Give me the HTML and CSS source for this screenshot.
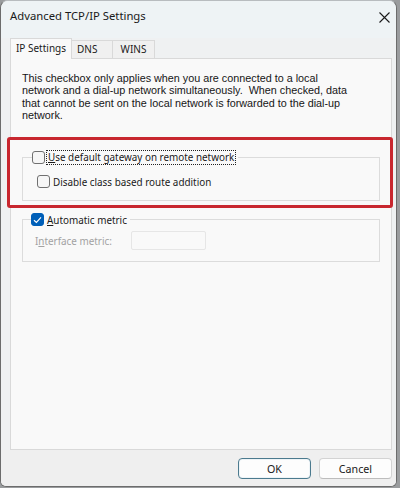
FILE: index.html
```html
<!DOCTYPE html>
<html>
<head>
<meta charset="utf-8">
<link rel="stylesheet" href="styles.css">
</head>
<body>
<div class="window">
  <div class="titlebar">
    <span class="title">Advanced TCP/IP Settings</span>
    <span class="close">
      <svg width="11" height="11" viewBox="0 0 11 11"><path d="M0.5 0.5 L10.5 10.5 M10.5 0.5 L0.5 10.5" stroke="#1a1a1a" stroke-width="1.1" fill="none"/></svg>
    </span>
  </div>
  <div class="body">
    <div class="tabs">
      <div class="tab active">IP Settings</div>
      <div class="tab dns">DNS</div>
      <div class="tab wins">WINS</div>
    </div>
    <div class="panel">
      <p class="info">This checkbox only applies when you are connected to a local<br>network and a dial-up network simultaneously.&nbsp; When checked, data<br>that cannot be sent on the local network is forwarded to the dial-up<br>network.</p>
      <div class="highlight">
        <fieldset class="group g1">
          <legend><span class="cb"></span><span class="focus"><u>U</u>se default gateway on remote network</span></legend>
          <div class="row r2"><span class="cb"></span><span class="lbl">Disable class based route addition</span></div>
        </fieldset>
      </div>
      <fieldset class="group g2">
        <legend><span class="cb checked"><svg width="9" height="8" viewBox="0 0 9 8"><path d="M1 4.2 L3.4 6.4 L8 1.4" stroke="#fff" stroke-width="1.2" fill="none"/></svg></span><span class="lbl"><u>A</u>utomatic metric</span></legend>
        <div class="row metric"><span class="dim">I<u>n</u>terface metric:</span><span class="input"></span></div>
      </fieldset>
    </div>
    <div class="footer">
      <button class="btn ok">OK</button>
      <button class="btn">Cancel</button>
    </div>
  </div>
</div>
</body>
</html>
```
FILE: styles.css
```css
html, body {
  margin: 0;
  padding: 0;
  background: #9a9c9e;
  width: 400px;
  height: 488px;
  overflow: hidden;
}
.window {
  width: 397px;
  height: 487px;
  box-sizing: border-box;
  background: #eff1f2;
  border: 1px solid #6c6c6c;
  border-top-color: #b8bcbf;
  border-radius: 8px 8px 6px 6px;
  overflow: hidden;
  font-family: "Noto Sans", "Open Sans", sans-serif;
  font-size: 9.9px;
  color: #1a1a1a;
  display: flex;
  flex-direction: column;
}
.titlebar {
  height: 37px;
  box-sizing: border-box;
  background: #eef3f5;
  display: flex;
  align-items: center;
  justify-content: space-between;
  padding: 0 6px 8px 9px;
  flex-shrink: 0;
}
.title {
  font-size: 11.3px;
  color: #1a1a1a;
}
.close {
  display: flex;
  align-items: center;
  margin-top: 4px;
}
.body {
  flex: 1;
  display: flex;
  flex-direction: column;
  padding: 0 4px 0 9px;
}
.tabs {
  display: flex;
  height: 20px;
  align-items: flex-end;
  position: relative;
  z-index: 1;
}
.tab {
  height: 18px;
  line-height: 17px;
  background: #f0f0f0;
  border: 1px solid #d9d9d9;
  border-bottom: none;
  box-sizing: border-box;
  font-size: 10px;
  text-align: center;
}
.tab.active {
  width: 62px;
  height: 21px;
  line-height: 19px;
  background: #f9f9f9;
  margin-bottom: -1px;
}
.tab.dns {
  width: 41px;
  text-align: left;
  padding-left: 5px;
  border-left: none;
}
.tab.wins {
  width: 43px;
  margin-left: -1px;
}
.panel {
  height: 392px;
  background: #f9f9f9;
  border: 1px solid #d9d9d9;
  box-sizing: border-box;
  padding: 13px 11px 0 11px;
  flex-shrink: 0;
}
.info {
  margin: 0;
  font-family: "Liberation Sans", Arial, sans-serif;
  font-size: 10.8px;
  line-height: 12.3px;
  white-space: nowrap;
  color: #161616;
}
.highlight {
  margin: 16px -13px 0 -15px;
  border: 3px solid #c8272f;
  border-radius: 3px;
  height: 71px;
  padding: 10px 10px 0 12px;
  box-sizing: border-box;
  background: #f9f9f9;
}
.group {
  margin: 0;
  border: 1px solid #dcdcdc;
  min-width: 0;
  box-sizing: border-box;
}
.g1 {
  height: 51px;
  padding: 0 9px;
}
.g2 {
  margin-top: 4px;
  height: 50px;
  padding: 0 8px;
}
legend {
  padding: 0 3px 0 0;
  height: 15px;
  display: flex;
  align-items: center;
  gap: 2px;
}
.cb {
  width: 13px;
  height: 13px;
  box-sizing: border-box;
  border: 1px solid #707070;
  border-radius: 3px;
  background: #f6f6f6;
  display: inline-flex;
  align-items: center;
  justify-content: center;
  flex-shrink: 0;
}
.cb.checked {
  background: #005fb8;
  border-color: #005fb8;
}
.focus {
  outline: 1px dotted #222;
  outline-offset: 0;
  padding: 0 1px;
  line-height: 13px;
}
.lbl {
  margin-left: 1px;
}
.row {
  display: flex;
  align-items: center;
  gap: 2px;
}
.r2 {
  height: 15px;
  margin-top: 9px;
  margin-left: 5px;
}
.metric {
  margin-top: 4px;
  margin-left: 4px;
  height: 19px;
  gap: 0;
}
.dim {
  color: #a2a2a2;
  width: 96px;
}
.input {
  width: 75px;
  height: 19px;
  box-sizing: border-box;
  border: 1px solid #e6e6e6;
  background: #f9f9f9;
  border-radius: 2px;
}
.footer {
  flex: 1;
  display: flex;
  justify-content: flex-end;
  align-items: flex-start;
  gap: 8px;
  padding-top: 8px;
  background: #efefef;
  margin: 0 -4px 0 -9px;
  padding-right: 4px;
}
.btn {
  width: 73px;
  height: 21px;
  font-family: inherit;
  font-size: 10.7px;
  background: #fdfdfd;
  border: 1px solid #d3d3d3;
  border-bottom-color: #bdbdbd;
  border-radius: 4px;
  color: #1a1a1a;
  padding: 0;
}
.btn.ok {
  border: 1px solid #4b7a8e;
  box-shadow: inset 0 0 0 1px #eef4f7;
}
```
